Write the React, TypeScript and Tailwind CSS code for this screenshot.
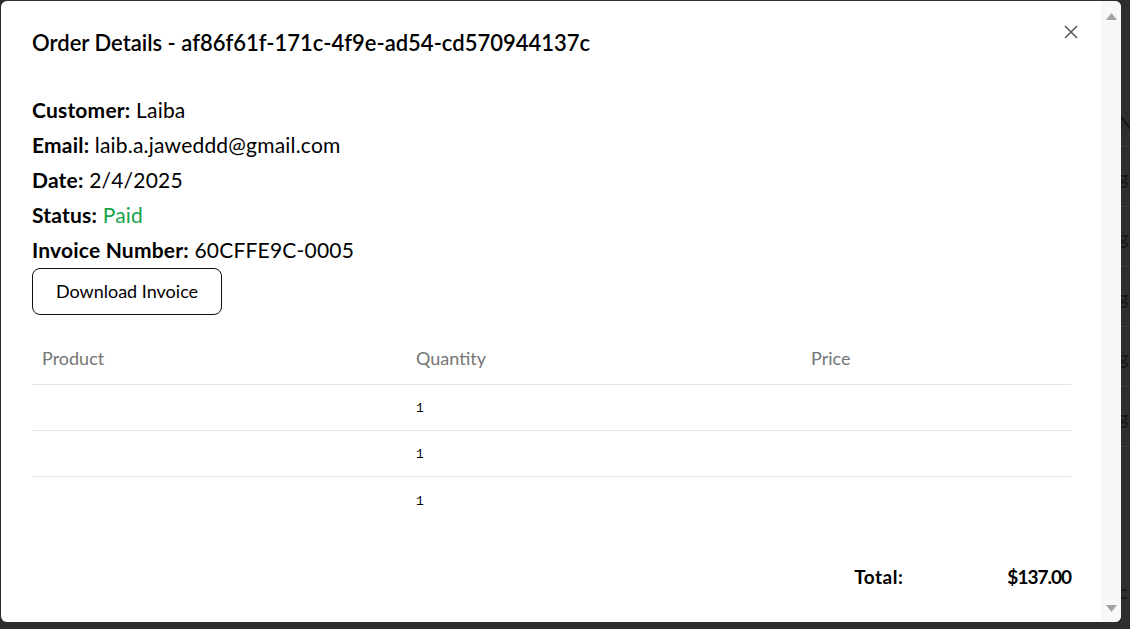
import React from "react";

const rows = [1, 1, 1];

export default function App() {
  return (
    <div
      className="relative h-[629px] w-[1130px] overflow-hidden bg-[#2e2e2e]"
      style={{ fontFamily: "Lato, 'Open Sans', sans-serif" }}
    >
      {/* page behind the modal */}
      <div className="flex h-full justify-end pt-[108px]">
        <div className="w-[12px] overflow-hidden text-[20px] leading-[28px] text-[#141414]">
          <div className="h-[39px] border-b border-[#3a3a3a]">N</div>
          {[0, 1, 2, 3, 4].map((i) => (
            <div key={i} className="flex h-[60px] items-center border-b border-[#3a3a3a]">
              g
            </div>
          ))}
          <div className="mt-[130px]">c</div>
        </div>
      </div>

      {/* modal */}
      <div className="absolute left-[1px] top-[1px] flex h-[621px] w-[1120px] overflow-hidden rounded-[6px] bg-white">
        <div className="relative flex-1 pl-[31px] pr-[30px] pt-[27px] text-black">
          <button className="absolute right-[23px] top-[24px] text-[#555]" aria-label="close">
            <svg width="14" height="14" viewBox="0 0 14 14" fill="none" stroke="currentColor" strokeWidth="1.5">
              <path d="M1 1 L13 13 M13 1 L1 13" />
            </svg>
          </button>
          <h2 className="text-[22px] font-semibold leading-[30px]">
            Order Details - af86f61f-171c-4f9e-ad54-cd570944137c
          </h2>
          <div className="mb-[1px] mt-[34px] text-[21px] leading-[35px] tracking-[0.2px]">
            <p>
              <span className="font-bold">Customer:</span> Laiba
            </p>
            <p>
              <span className="font-bold">Email:</span> laib.a.jaweddd@gmail.com
            </p>
            <p>
              <span className="font-bold">Date:</span> 2/4/2025
            </p>
            <p>
              <span className="font-bold">Status:</span> <span className="text-[#16a34a]">Paid</span>
            </p>
            <p>
              <span className="font-bold">Invoice Number:</span> 60CFFE9C-0005
            </p>
          </div>
          <button className="h-[47px] w-[190px] rounded-[8px] border border-[#111] text-[18px]">
            Download Invoice
          </button>

          <table className="mt-[23px] w-full table-fixed border-collapse">
            <colgroup>
              <col className="w-[374px]" />
              <col className="w-[395px]" />
              <col />
            </colgroup>
            <thead>
              <tr className="h-[46px] border-b border-[#e5e5e5] text-left text-[18px] font-normal text-[#757575]">
                <th className="px-[10px] pb-[4px] font-normal">Product</th>
                <th className="px-[10px] pb-[4px] font-normal">Quantity</th>
                <th className="px-[10px] pb-[4px] font-normal">Price</th>
              </tr>
            </thead>
            <tbody>
              {rows.map((q, i) => (
                <tr
                  key={i}
                  className={`h-[46px] ${i < rows.length - 1 ? "border-b border-[#e5e5e5]" : ""}`}
                >
                  <td className="px-[10px]"></td>
                  <td className="px-[10px] pt-[4px] font-['Liberation_Mono',monospace] text-[13px]">{q}</td>
                  <td className="px-[10px]"></td>
                </tr>
              ))}
            </tbody>
          </table>

          <div className="mt-[43px] flex justify-end text-[19px] font-bold leading-[24px]">
            <span className="mr-[104px] tracking-[0.5px]">Total:</span>
            <span className="tracking-[-1px]">$137.00</span>
          </div>
        </div>

        {/* scrollbar */}
        <div className="flex w-[20px] flex-col items-center justify-between bg-[#f8f8f8] pb-[10px] pt-[12px]">
          <svg width="11" height="7" viewBox="0 0 11 7">
            <path d="M5.5 0 L11 7 L0 7 Z" fill="#a3a3a3" />
          </svg>
          <svg width="11" height="7" viewBox="0 0 11 7">
            <path d="M0 0 L11 0 L5.5 7 Z" fill="#a3a3a3" />
          </svg>
        </div>
      </div>
    </div>
  );
}
